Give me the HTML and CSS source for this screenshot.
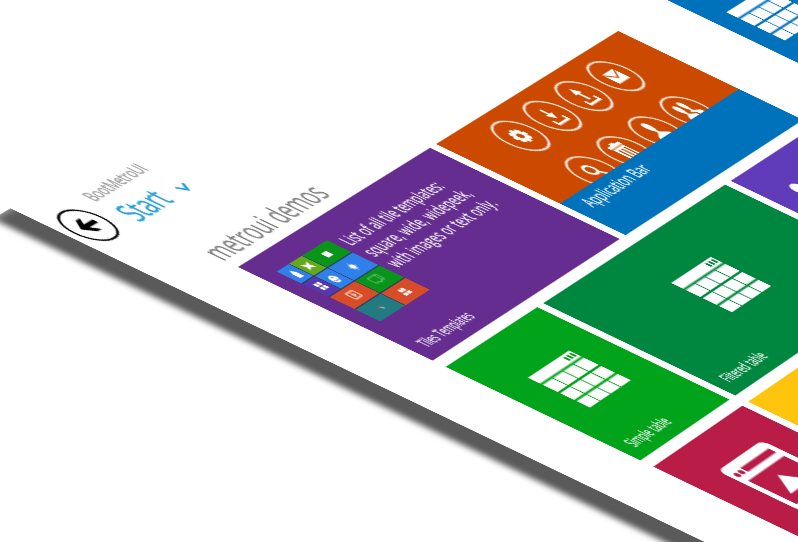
FILE: index.html
```html
<!DOCTYPE html>
<html lang="en">
<head>
<meta charset="utf-8">
<title>BootMetroUI</title>
<link rel="stylesheet" href="styles.css">
</head>
<body>
<svg class="defs" width="0" height="0">
  <symbol id="table" viewBox="0 0 68 48">
    <path fill-rule="evenodd" d="M0 0H68V9.5H0ZM53 2.2V7.2H56V2.2ZM58 2.2V7.2H61V2.2ZM63 2.2V7.2H66V2.2Z"/>
    <path d="M0 11.5H16V23H0ZM17.3 11.5H33.3V23H17.3ZM34.6 11.5H50.6V23H34.6ZM52 11.5H68V23H52ZM0 25H16V35.8H0ZM17.3 25H33.3V35.8H17.3ZM34.6 25H50.6V35.8H34.6ZM52 25H68V35.8H52ZM0 37.8H16V48H0ZM17.3 37.8H33.3V48H17.3ZM34.6 37.8H50.6V48H34.6ZM52 37.8H68V48H52Z"/>
  </symbol>
</svg>
<main class="page">
  <header class="header">
    <svg class="back" viewBox="0 0 44 44"><circle cx="22" cy="22" r="20.3" fill="none" stroke="#000" stroke-width="2"/><path d="M11 22L20 13.5H26L20 19.8H33V24.2H20L26 30.5H20Z"/></svg>
    <div class="titles">
      <div class="brand">BootMetroUI</div>
      <div class="start">Start</div>
    </div>
    <svg class="chevron" viewBox="0 0 14 10"><path d="M1.500 1.500L7 8L12.500 1.500" fill="none" stroke="#2a9fda" stroke-width="2.500"/></svg>
  </header>
  <h2 class="group-title">metroui demos</h2>
  <div class="groups">
    <section class="tiles">
      <article class="tile wide violet">
        <div class="mosaic">
          <i class="m big green"><svg viewBox="0 0 10 10"><path d="M1 2H9V8H1Z"/></svg></i>
          <i class="m c1 blue"><svg viewBox="0 0 10 10"><path d="M2 4L5 0L8 4V10H2Z"/></svg></i>
          <i class="m c2 lime"><svg viewBox="0 0 10 10"><path d="M0 1L5 3L10 1L8 5L10 9L5 7L0 9L2 5Z"/></svg></i>
          <i class="m c1 indigo"><svg viewBox="0 0 10 10"><path d="M1 0H4.500V4H1ZM5.500 0H9V4H5.500ZM1 5H4.500V9H1ZM5.500 5H9V9H5.500Z"/></svg></i>
          <i class="m c2 blue"><svg viewBox="0 0 10 10"><path d="M8.500 6H3M2 5H8A3.500 3.500 0 1 0 7 8" fill="none" stroke="#fff" stroke-width="2"/></svg></i>
          <i class="m big blue"><svg viewBox="0 0 10 10"><circle cx="5" cy="5" r="2.800"/><path d="M5 0V10M0 5H10M2 2L8 8M8 2L2 8" stroke="#fff" stroke-width=".6"/></svg></i>
          <i class="m left red"><svg viewBox="0 0 10 10"><path d="M0 1H10V9H0ZM4 3L7 5L4 7Z" fill="none" stroke="#fff"/></svg></i>
          <i class="m big green"><svg class="faint" viewBox="0 0 10 10"><path d="M-3 0H10V7H5L3 9V7H-3ZM7 0V7" fill="none" stroke="#fff" stroke-width=".8"/></svg></i>
          <i class="m left teal"><svg class="faint" viewBox="0 0 10 10"><path d="M2 5L5 2L8 6L5 8Z" fill="#a44e4e"/><path d="M4 4L9 7L6 8Z"/></svg></i>
          <i class="m big red"><svg viewBox="0 0 10 10"><circle cx="3" cy="3" r="2"/><circle cx="7" cy="3" r="2"/><path d="M0 9V6H4.600V9ZM5.400 9V6H10V9Z"/></svg></i>
        </div>
        <p class="copy">List of all tile templates:<br><span>square, wide, widepeek,<br>with images or text only.</span></p>
        <span class="label">Tiles Templates</span>
      </article>
      <article class="tile wide orange">
        <div class="actions">
          <svg viewBox="-22 -22 44 44"><circle r="20.400"/><path transform="scale(.88)" fill-rule="evenodd" d="M-2 -10H2L2.700 -7L5.500 -8.500L8.500 -5.500L7 -2.700L10 -2V2L7 2.700L8.500 5.500L5.500 8.500L2.700 7L2 10H-2L-2.700 7L-5.500 8.500L-8.500 5.500L-7 2.700L-10 2V-2L-7 -2.700L-8.500 -5.500L-5.500 -8.500L-2.700 -7ZM0 -3.600A3.600 3.600 0 1 0 0 3.600A3.600 3.600 0 1 0 0 -3.600Z"/></svg>
          <svg viewBox="-22 -22 44 44"><circle r="20.400"/><path d="M-1.300 -10H1.300V-3H5L0 4L-5 -3H-1.300ZM-9 4H-6.500V8H6.500V4H9V10.500H-9Z"/></svg>
          <svg viewBox="-22 -22 44 44"><circle r="20.400"/><path d="M-1.400 5H1.400V-4H5L0 -12L-5 -4H-1.400ZM-9 4H-6.500V8H6.500V4H9V10.500H-9Z"/></svg>
          <svg viewBox="-22 -22 44 44"><circle r="20.400"/><path d="M-9 -7H9L0 1ZM-9 -5L0 3L9 -5V7.500H-9Z"/></svg>
          <svg viewBox="-22 -22 44 44"><circle r="20.400"/><g fill="none" stroke="#fff" stroke-width="2.600"><ellipse cx="-1" cy="-3" rx="5.500" ry="5.500"/><path d="M2.500 1L8 9"/></g></svg>
          <svg viewBox="-22 -22 44 44"><circle r="20.400"/><path d="M-3 -13H3V-11H9V-7.500H-9V-11H-3ZM-8 -6.500H8V10H6V-4H4V10H1.500V-4H-.5V10H-3V-4H-5V10H-8Z"/></svg>
          <svg viewBox="-22 -22 44 44"><circle r="20.400"/><path d="M0 -13C5 -13 4.500 -5 1.500 -1V1L8 5Q10 7 10 11H-10Q-10 7 -8 5L-1.500 1V-1C-4.500 -5 -5 -13 0 -13Z"/></svg>
          <svg viewBox="-22 -22 44 44"><circle r="20.400"/><path d="M-5 -11C-1 -11 -1 -4 -3.500 0V2L3 5V10H-12Q-12 5 -6.500 2V0C-9 -4 -9 -11 -5 -11ZM4 -12C8 -12 8 -5 5.500 -1V1L12 4V9H5V4L0 1.500L3 0V-1C1 -5 0 -12 4 -12Z"/></svg>
        </div>
        <div class="caption"><span>Application Bar</span></div>
      </article>
      <article class="tile green-bright"><svg class="table"><use href="#table"/></svg><span class="label">Simple table</span></article>
      <article class="tile wide green-deep"><svg class="table"><use href="#table"/></svg><span class="label">Filtered table</span></article>
      <article class="tile iris"><svg class="full" viewBox="0 0 150 150"><circle cx="39" cy="37" r="7"/></svg></article>
      <article class="tile crimson">
        <svg class="full" viewBox="0 0 150 150"><path fill-rule="evenodd" d="M46 32H105Q113 32 113 40V90Q113 98 105 98H46Q38 98 38 90V40Q38 32 46 32ZM45 52.500V90H106V52.500ZM58 40.500V46.500H106V40.500Z"/><path d="M74 62L92 80.500H56Z"/><circle class="dot" cx="46" cy="43.700" r="2.700"/><circle class="dot" cx="53" cy="43.700" r="2.700"/></svg>
      </article>
      <article class="tile wide yellow"></article>
    </section>
    <section class="tiles second">
      <article class="tile azure"><svg class="table"><use href="#table"/></svg></article>
    </section>
  </div>
</main>
</body>
</html>
```
FILE: styles.css
```css
* { box-sizing: border-box; }
html, body { margin: 0; width: 798px; height: 542px; overflow: hidden; background: #fff; }
body { font-family: "Open Sans", "Noto Sans", sans-serif; }
.defs { display: block; }

/* the start screen lies on a tilted plane */
.page {
  width: 1100px;
  height: 900px;
  background: #fff;
  box-shadow: -27px -2px 9px #5a5a5a;
  clip-path: inset(0 0 0 -60px);
  transform-origin: 0 0;
  transform: matrix3d(.656, -.372, 0, .000085, 1.298, .624, 0, 0, 0, 0, 1, 0, 238, 267, 0, 1) translate(-72px, -139px);
}
.header { display: flex; height: 106.500px; padding-left: 7px; }
.back { width: 44px; height: 44px; margin-top: 22.500px; flex: none; }
.titles { width: 86px; padding: 17.500px 0 0 15px; white-space: nowrap; flex: none; }

/* narrow lettering */
.brand, .start, .group-title, .label, .copy, .caption span { transform-origin: 0 50%; -webkit-text-stroke: .2px; }
.brand { font-size: 15px; line-height: 15px; color: #999; transform: translate(1px, .5px) scaleX(.92); -webkit-text-stroke-width: .35px; }
.start { margin: 7px 0 0 2px; font-size: 28px; line-height: 28px; color: #2a9fda; transform: scaleX(.88); -webkit-text-stroke-width: .5px; }
.chevron { width: 15px; height: 11px; margin: 54px 0 0 4px; }
.group-title { margin: 0 0 8.500px 70px; font-size: 26px; line-height: 24px; font-weight: 400; color: #808080; transform: scaleX(.92); }
.groups { display: flex; gap: 87px; padding-left: 72px; }
.tiles { display: grid; grid-template-columns: repeat(4, 150px); grid-auto-rows: 150px; gap: 10px; flex: none; }
.second { grid-template-columns: 150px; }

.tile { display: flex; flex-direction: column; align-items: center; overflow: hidden; color: #fff; fill: #fff; }
.wide { grid-column: span 2; }
.violet { display: grid; grid-template-columns: 80px 1fr; grid-template-rows: 80px 1fr; column-gap: 9px; align-items: start; padding: 20px 0 0 20px; background: #652d90; }
.orange { background: #cc4a00; align-items: stretch; }
.green-bright { background: #00a31a; }
.green-deep { background: #00873f; }
.iris { background: #603cba; }
.crimson { background: #b91d47; }
.yellow { background: #ffc40d; }
.azure { background: #0072bc; }
.label { align-self: flex-start; margin: auto 0 8px 15px; font-size: 13px; line-height: 16px; word-spacing: 1px; white-space: nowrap; transform: scaleX(.82); }
.violet .label { grid-column: 1 / 3; align-self: end; justify-self: start; margin-left: -5px; }
.copy { justify-self: start; margin: 0; font-size: 15px; line-height: 18px; white-space: nowrap; transform: scaleX(.93); }
.copy span { letter-spacing: .3px; }
.table { width: 68px; height: 48px; margin-top: 44px; flex: none; }
.azure { align-items: flex-start; }
.azure .table { margin: 36px 0 0 26px; }
.full { width: 150px; height: 150px; }
.dot { fill: #b91d47; }

.mosaic { display: grid; width: 80px; height: 80px; grid-template-columns: repeat(4, 19.250px); grid-template-rows: repeat(4, 19.250px); gap: 1px; background: #2c3b62; }
.m { display: flex; align-items: center; justify-content: center; height: 100%; }
.m svg { width: 10px; height: 10px; overflow: visible; }
.m .faint { opacity: .5; }
.big { grid-column: 3 / 5; }
.left { grid-column: 1 / 3; }
.c1 { grid-column: 1; }
.c2 { grid-column: 2; }
.m:nth-child(-n+3) { grid-row: 1; }
.m:nth-child(4), .m:nth-child(5), .m:nth-child(6) { grid-row: 2; }
.m:nth-child(7), .m:nth-child(8) { grid-row: 3; }
.m:nth-child(9), .m:nth-child(10) { grid-row: 4; }
.green { background: #08951a; }
.blue { background: #2f80e8; }
.lime { background: #62a91c; }
.indigo { background: #5638ae; }
.red { background: #d84d27; }
.teal { background: #227b80; }

.actions { display: grid; grid-template-columns: repeat(4, 44px); column-gap: 10.200px; row-gap: 15px; height: 98px; padding: 9.600px 0 0 52px; overflow: hidden; flex: none; }
.actions svg { width: 44px; height: 44px; }
.actions circle { fill: none; stroke: #f3e4dc; stroke-width: 2; }
.caption { flex: 1; padding: 3px 0 0 18px; background: #0072bc; font-size: 15.500px; line-height: 19px; }
.caption span { display: inline-block; transform: scaleX(.92); }
```
